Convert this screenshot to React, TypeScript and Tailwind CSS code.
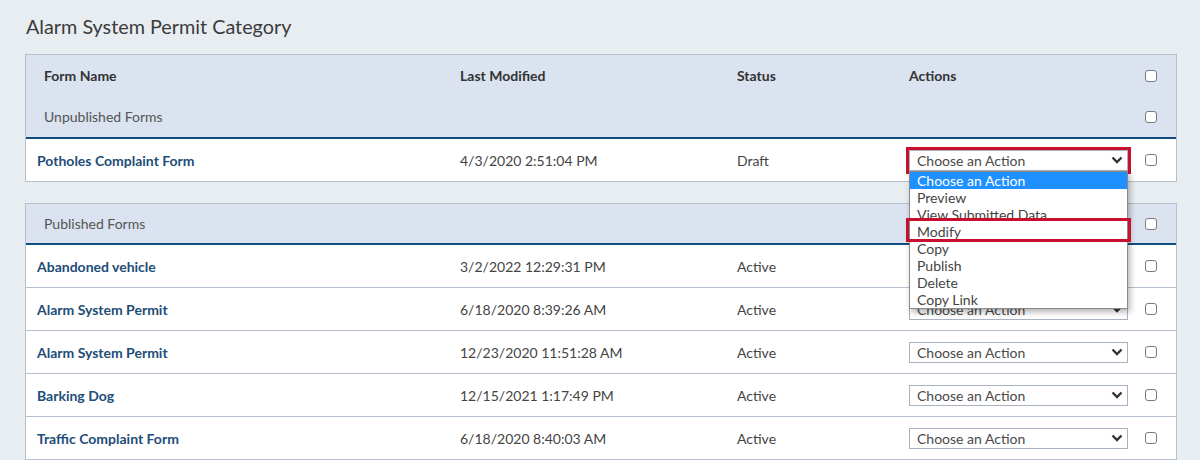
import React from 'react'

const font = { fontFamily: '"Lato", "Noto Sans", sans-serif' }

const published = [
  { name: 'Abandoned vehicle', date: '3/2/2022 12:29:31 PM' },
  { name: 'Alarm System Permit', date: '6/18/2020 8:39:26 AM' },
  { name: 'Alarm System Permit', date: '12/23/2020 11:51:28 AM' },
  { name: 'Barking Dog', date: '12/15/2021 1:17:49 PM' },
  { name: 'Traffic Complaint Form', date: '6/18/2020 8:40:03 AM' },
]

const options = ['Choose an Action', 'Preview', 'View Submitted Data', 'Modify', 'Copy', 'Publish', 'Delete', 'Copy Link']

const cols = 'grid grid-cols-[434px_277px_172px_234px_1fr] items-center'

const Checkbox = () => (
  <span className="block w-[12px] h-[12px] border border-[#7a7a7a] rounded-[3px] bg-white" />
)

const Chevron = () => (
  <svg width="12" height="8" viewBox="0 0 12 8" className="text-[#333]">
    <path d="M1.5 1.5 L6 6 L10.5 1.5" fill="none" stroke="currentColor" strokeWidth="2.4" />
  </svg>
)

const Select = () => (
  <div className="w-[219px] h-[21px] border border-[#a8b3c1] bg-white flex items-center justify-between pl-[7px] pr-[4px] text-[14px] text-[#4a4a4a]">
    <span>Choose an Action</span>
    <Chevron />
  </div>
)

const Row = ({ name, date, status, children }: { name: string; date: string; status: string; children?: React.ReactNode }) => (
  <div className={`${cols} h-[43px] last:h-[42px] border-b border-[#b5c0cd] last:border-b-0 bg-white`}>
    <div className="pl-[11px] text-[14px] font-bold text-[#1d4d78]">{name}</div>
    <div className="text-[14px] text-[#444]">{date}</div>
    <div className="text-[14px] text-[#444]">{status}</div>
    <div className="relative">{children ?? <Select />}</div>
    <div className="pl-[2px]"><Checkbox /></div>
  </div>
)

const Dropdown = () => (
  <div className="absolute left-0 top-[21px] z-10 w-[219px] bg-white border border-[#8a8a8a] shadow-[2px_3px_6px_rgba(0,0,0,0.3)] text-[14px] text-[#444]">
    {options.map((o, i) => (
      <div key={o} className={`h-[17px] leading-[17px] pl-[7px] ${i === 0 ? 'bg-[#1e90ff] text-white' : ''}`}>
        {o}
      </div>
    ))}
    {/* Modify highlight */}
    <div className="absolute left-[-4px] top-[46px] w-[225px] h-[24px] border-[3px] border-[#c8102e]" />
  </div>
)

const App = () => {
  return (
    <main className="h-[460px] bg-[#e8edf2] px-[25px] pt-[13px] overflow-hidden" style={font}>
      <h1 className="text-[19.8px] text-[#3b3b3b] leading-[26px] ml-[1px]">Alarm System Permit Category</h1>

      {/* Unpublished */}
      <section className="mt-[15px] w-[1152px] border border-[#b5c0cd]">
        <div className="bg-[#dae3ef] border-b-2 border-[#0f4c7f]">
          <div className={`${cols} h-[41px] text-[14px] font-bold text-[#333]`}>
            <div className="pl-[18px]">Form Name</div>
            <div>Last Modified</div>
            <div>Status</div>
            <div>Actions</div>
            <div className="pl-[2px]"><Checkbox /></div>
          </div>
          <div className={`${cols} h-[41px]`}>
            <div className="pl-[18px] text-[14px] text-[#555]">Unpublished Forms</div>
            <div />
            <div />
            <div />
            <div className="pl-[2px]"><Checkbox /></div>
          </div>
        </div>
        <Row name="Potholes Complaint Form" date="4/3/2020 2:51:04 PM" status="Draft">
          <div className="relative">
            <div className="absolute left-[-3px] top-[-3px] w-[225px] h-[27px] border-[3px] border-[#c8102e] pointer-events-none" />
            <Select />
            <Dropdown />
          </div>
        </Row>
      </section>

      {/* Published */}
      <section className="mt-[21px] w-[1152px] border border-[#b5c0cd]">
        <div className={`${cols} h-[41px] bg-[#dae3ef] border-b-2 border-[#0f4c7f]`}>
          <div className="pl-[18px] text-[14px] text-[#555]">Published Forms</div>
          <div />
          <div />
          <div />
          <div className="pl-[2px]"><Checkbox /></div>
        </div>
        {published.map((p, i) => (
          <Row key={i} name={p.name} date={p.date} status="Active" />
        ))}
      </section>
    </main>
  )
}

export default App
